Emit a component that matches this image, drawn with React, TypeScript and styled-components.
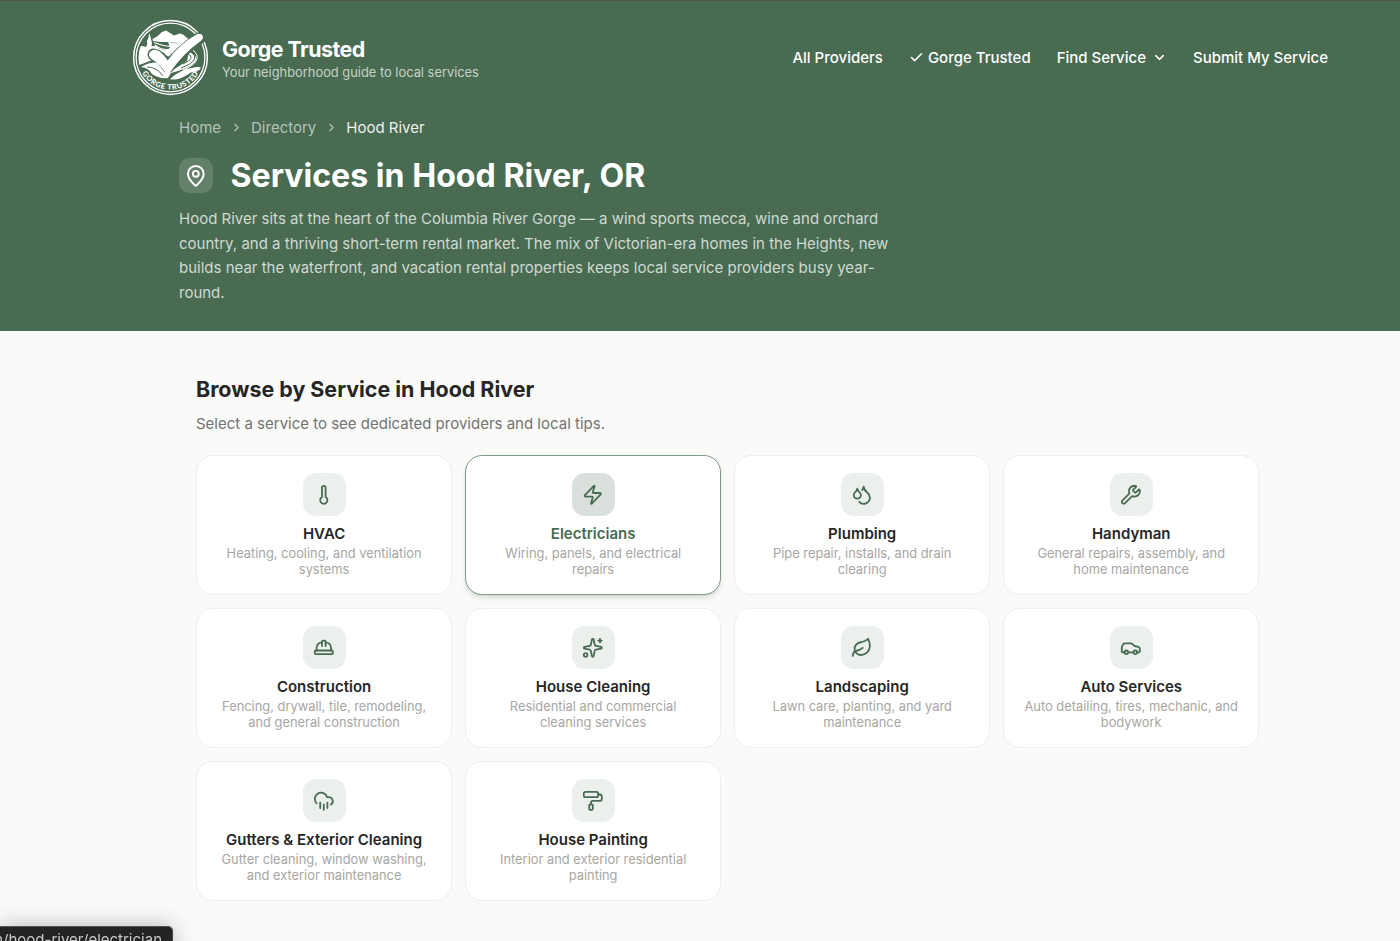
import React from "react";
import styled, { createGlobalStyle } from "styled-components";
import {
  Car, Check, ChevronDown, ChevronRight, CloudRain, Droplets, HardHat, Leaf,
  MapPin, PaintRoller, Sparkles, Thermometer, Wrench, Zap, type LucideIcon,
} from "lucide-react";

const green = "#486b51";

const GlobalStyle = createGlobalStyle`
  *, *::before, *::after { box-sizing: border-box; }
  html, body { margin: 0; height: 941px; overflow: hidden; }
  body { background: #fafaf8; color: #262626; font-family: Inter, "Liberation Sans", sans-serif; }
  h1, h2, h3, p { margin: 0; }
  a { color: inherit; text-decoration: none; }
`;

const Banner = styled.header`
  height: 331px;
  background: ${green};
  border-top: 1px solid #4f5751;
  color: #fff;
`;
const TopBar = styled.div`
  display: flex;
  align-items: center;
  justify-content: space-between;
  padding: 18px 72px 0 132px;
`;
const Brand = styled.a`
  display: flex;
  align-items: center;
  gap: 13px;
`;
const BrandText = styled.div`
  display: flex;
  flex-direction: column;
  padding-top: 3px;
`;
const BrandName = styled.span`
  font-size: 21.43px;
  line-height: 26px;
  font-weight: 700;
  letter-spacing: -0.54px;
`;
const Tagline = styled.span`
  font-size: 12.86px;
  line-height: 21px;
  color: rgba(255, 255, 255, 0.7);
`;
const Nav = styled.nav`
  display: flex;
  align-items: center;
  gap: 26px;
  font-size: 15px;
  font-weight: 500;
`;
const NavLink = styled.a<{ $gap?: number }>`
  display: flex;
  align-items: center;
  gap: ${({ $gap = 0 }) => $gap}px;
`;
const Hero = styled.div`
  padding: 0 179px;
`;
const Crumbs = styled.nav`
  display: flex;
  align-items: center;
  gap: 8.5px;
  margin-top: 20.4px;
  height: 22px;
  font-size: 15px;
  color: rgba(255, 255, 255, 0.6);
`;
const CurrentCrumb = styled.span`
  color: rgba(255, 255, 255, 0.92);
`;
const TitleRow = styled.div`
  display: flex;
  align-items: center;
  gap: 17.2px;
  margin-top: 16.1px;
  height: 42px;
`;
const PinTile = styled.span`
  display: grid;
  place-items: center;
  width: 34.3px;
  height: 34.3px;
  border-radius: 10.7px;
  background: rgba(255, 255, 255, 0.15);
`;
const Title = styled.h1`
  padding-top: 2px;
  font-size: 32.14px;
  line-height: 40px;
  font-weight: 700;
`;
const Intro = styled.p`
  width: 720px;
  margin-top: 11px;
  font-size: 15px;
  line-height: 24.38px;
  color: rgba(255, 255, 255, 0.75);
`;
const Main = styled.main`
  padding: 43px 140.7px 0 196px;
`;
const SectionTitle = styled.h2`
  font-size: 21.43px;
  line-height: 30px;
  font-weight: 700;
`;
const SectionHint = styled.p`
  margin-top: 8.6px;
  font-size: 15px;
  line-height: 21.4px;
  color: #737373;
`;
const Grid = styled.div`
  display: grid;
  grid-template-columns: repeat(4, 1fr);
  grid-auto-rows: 140.1px;
  gap: 12.86px;
  margin-top: 21.3px;
`;
const Card = styled.a<{ $active?: boolean }>`
  display: flex;
  flex-direction: column;
  align-items: center;
  padding: 16.8px 17px;
  border: 1px solid ${({ $active }) => ($active ? "#7d9885" : "#eeeeec")};
  border-radius: 17.1px;
  background: #fff;
  text-align: center;
  box-shadow: ${({ $active }) => ($active ? "0 4px 6px -1px rgba(0,0,0,.1), 0 2px 4px -2px rgba(0,0,0,.1)" : "none")};
`;
const IconTile = styled.span<{ $active?: boolean }>`
  display: grid;
  place-items: center;
  flex: none;
  width: 43px;
  height: 43px;
  border-radius: 12.8px;
  color: ${green};
  background: ${({ $active }) => ($active ? "#dae1dc" : "#ecf0ed")};
`;
const CardTitle = styled.h3<{ $active?: boolean }>`
  margin-top: 9px;
  font-size: 15px;
  line-height: 18.7px;
  font-weight: 600;
  color: ${({ $active }) => ($active ? green : "#262626")};
`;
const CardText = styled.p`
  margin-top: 2px;
  font-size: 12.86px;
  line-height: 16px;
  color: #a8a6a2;
`;
const StatusBubble = styled.div`
  position: fixed;
  left: 0;
  top: 926px;
  width: 173px;
  height: 30px;
  padding-right: 10px;
  border-top: 1px solid #555;
  border-right: 1px solid #444;
  border-top-right-radius: 5px;
  background: #232323;
  box-shadow: 0 0 22px rgba(0, 0, 0, 0.28);
  color: #c8c8c8;
  font-size: 15px;
  line-height: 25px;
  white-space: nowrap;
  display: flex;
  justify-content: flex-end;
`;

function Logo() {
  return (
    <svg width="77" height="77" viewBox="0 0 77 77" fill="none">
      <defs>
        <clipPath id="seal"><circle cx="38.5" cy="38.5" r="32" /></clipPath>
        <path id="ring" d="M6.3 38.5 A32.2 32.2 0 0 0 70.7 38.5" />
      </defs>
      <circle cx="38.5" cy="38.5" r="36.9" stroke="#fff" strokeWidth="1.5" />
      <circle cx="38.5" cy="38.5" r="34.4" stroke="#fff" strokeWidth="1.3" />
      <g clipPath="url(#seal)">
        {/* mountain ridge */}
        <path d="M20.5 20 25 17.5 30 13 34 11.5 38 14 42 16.5 48 14.5 51 15.5 55 19 62 23 56 28 51 29 45 24 37 23 29 23 21 22Z" fill="#fff" />
        <path d="M22 23.5Q31 27 38 27.5M23 26Q29 31 37 31" stroke="#fff" strokeWidth="1.1" />
        <path d="M36 23 48 25 53 29 45 35 37 38 32 32 38 29Z" fill="#fff" />
        {/* bank with pines */}
        <path d="M5 27 10 27 14 28 15.3 25 14.8 22 16 20 17.5 14 19 20 20 24 19.5 27 25 27 26 29 34 32 36 37 31 40 20 41 10 45 5 47Z" fill="#fff" />
        {/* river bends and near shore */}
        <path d="M9 48Q21 41 32 45L38 53 55 42 57 33Q69 38 61 45 52 51 39 54L36 59Q27 60 20 55 17 49 9 48Z" fill="#fff" />
        <path d="M55 34Q65 39 51 45M59 33Q70 41 49 49" stroke={green} strokeWidth="1" />
        <path d="M61 31Q73 42 51 51" stroke="#fff" strokeWidth="1" />
        <path d="M15 48Q25 48 31 57" stroke={green} strokeWidth="1" />
        <path d="M38 60Q49 50 60 49 66 47 70 49L64 53Q60 52 55 56 45 62 38 60Z" fill="#fff" />
      </g>
      <path d="M21.5 35.5Q28 36 36 48 49 31 68 19" stroke={green} strokeWidth="12" strokeLinecap="round" strokeLinejoin="round" />
      <path d="M17.9 33Q22.5 28.7 28 32.8 32 36 35.7 41.5 47 25 65 15.2 69.3 13.7 70.8 17 71.7 20.1 68 22.5 51 34.5 37.3 54.4 35.8 56.3 34.2 54.4 28.3 45.5 20.4 40.4 15 37 17.9 33Z" fill="#fff" />
      <text fill="#fff" fontFamily="Lato, sans-serif" fontSize="7.4" fontWeight="900" letterSpacing=".65" textAnchor="middle">
        <textPath href="#ring" startOffset="50%">GORGE TRUSTED</textPath>
      </text>
    </svg>
  );
}

type Service = { name: string; lines: [string, string]; icon: LucideIcon; active?: boolean };
const services: Service[] = [
  { name: "HVAC", lines: ["Heating, cooling, and ventilation", "systems"], icon: Thermometer },
  { name: "Electricians", lines: ["Wiring, panels, and electrical", "repairs"], icon: Zap, active: true },
  { name: "Plumbing", lines: ["Pipe repair, installs, and drain", "clearing"], icon: Droplets },
  { name: "Handyman", lines: ["General repairs, assembly, and", "home maintenance"], icon: Wrench },
  { name: "Construction", lines: ["Fencing, drywall, tile, remodeling,", "and general construction"], icon: HardHat },
  { name: "House Cleaning", lines: ["Residential and commercial", "cleaning services"], icon: Sparkles },
  { name: "Landscaping", lines: ["Lawn care, planting, and yard", "maintenance"], icon: Leaf },
  { name: "Auto Services", lines: ["Auto detailing, tires, mechanic, and", "bodywork"], icon: Car },
  { name: "Gutters & Exterior Cleaning", lines: ["Gutter cleaning, window washing,", "and exterior maintenance"], icon: CloudRain },
  { name: "House Painting", lines: ["Interior and exterior residential", "painting"], icon: PaintRoller },
];

function ServiceCard({ name, lines, icon: Icon, active }: Service) {
  return (
    <Card href="#" $active={active}>
      <IconTile $active={active}><Icon size={21.6} /></IconTile>
      <CardTitle $active={active}>{name}</CardTitle>
      <CardText>{lines[0]}<br />{lines[1]}</CardText>
    </Card>
  );
}

export default function App() {
  return (
    <>
      <GlobalStyle />
      <Banner>
        <TopBar>
          <Brand href="#">
            <Logo />
            <BrandText>
              <BrandName>Gorge Trusted</BrandName>
              <Tagline>Your neighborhood guide to local services</Tagline>
            </BrandText>
          </Brand>
          <Nav>
            <NavLink href="#">All Providers</NavLink>
            <NavLink href="#" $gap={4}><Check size={15} strokeWidth={2.5} />Gorge Trusted</NavLink>
            <NavLink href="#" $gap={6}>Find Service<ChevronDown size={15} strokeWidth={2.3} /></NavLink>
            <NavLink href="#">Submit My Service</NavLink>
          </Nav>
        </TopBar>
        <Hero>
          <Crumbs>
            <span>Home</span><ChevronRight size={13} />
            <span>Directory</span><ChevronRight size={13} />
            <CurrentCrumb>Hood River</CurrentCrumb>
          </Crumbs>
          <TitleRow>
            <PinTile><MapPin size={23.6} /></PinTile>
            <Title>Services in Hood River, OR</Title>
          </TitleRow>
          <Intro>
            Hood River sits at the heart of the Columbia River Gorge — a wind sports mecca, wine and orchard country, and a thriving short-term rental market. The mix of Victorian-era homes in the Heights, new builds near the waterfront, and vacation rental properties keeps local service providers busy year-round.
          </Intro>
        </Hero>
      </Banner>
      <Main>
        <SectionTitle>Browse by Service in Hood River</SectionTitle>
        <SectionHint>Select a service to see dedicated providers and local tips.</SectionHint>
        <Grid>{services.map((s) => <ServiceCard key={s.name} {...s} />)}</Grid>
      </Main>
      <StatusBubble>n/hood-river/electrician</StatusBubble>
    </>
  );
}
